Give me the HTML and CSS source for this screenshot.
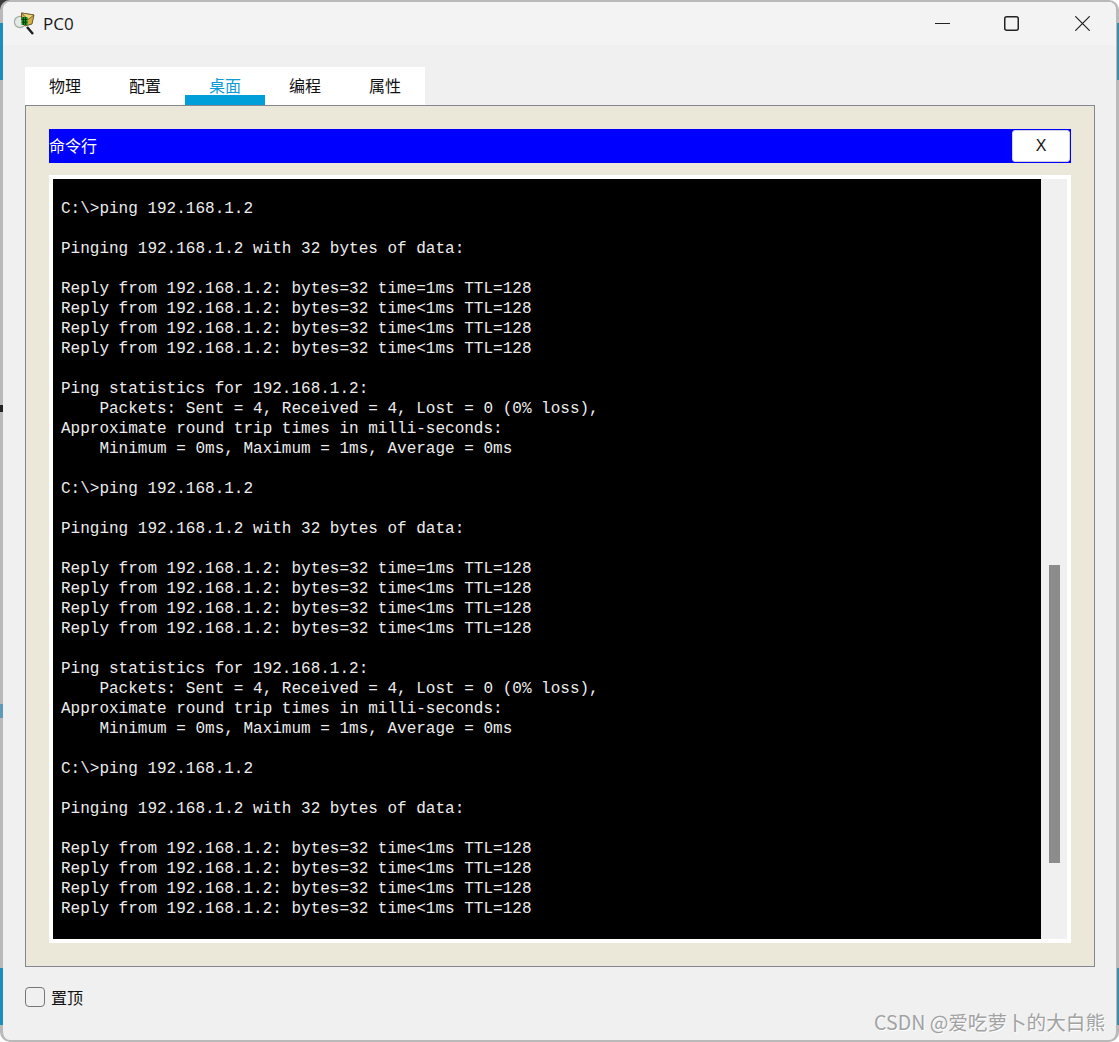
FILE: index.html
```html
<!DOCTYPE html>
<html lang="zh-CN">
<head>
<meta charset="utf-8">
<title>PC0</title>
<link rel="stylesheet" href="styles.css">
</head>
<body>
<div class="desk-corner"></div>
<div class="window">
  <header class="titlebar">
    <div class="title">
      <svg class="app-icon" width="24" height="24" viewBox="14 10 24 24">
        <path d="M27 26L33 33" stroke="#1c1c1c" stroke-width="2.400" fill="none"/>
        <circle cx="20" cy="21" r="5.600" fill="#e6e8e6" stroke="#a3a8a4" stroke-width="1.200"/>
        <path d="M21.500 12L34 14L32 23L25 25L21.500 18Z" fill="#d9ad45" stroke="#4d3f16" stroke-width=".8"/>
        <path d="M21.500 12L28 18.500L34 14Z" fill="#f0d680" stroke="#6a5620" stroke-width=".8"/>
        <rect x="21.500" y="16" width="6" height="8" fill="#0c9a18"/>
        <path d="M23.500 16V24M25.500 16V24M21.500 18.500H27.500M21.500 21.200H27.500" stroke="#03300a" stroke-width=".8"/>
      </svg>
      <span>PC0</span>
    </div>
    <div class="controls">
      <svg width="15" height="15" viewBox="0 0 15 15"><path d="M0 7.500H15" stroke="#222" stroke-width="1"/></svg>
      <svg width="15" height="15" viewBox="0 0 15 15"><rect x=".75" y=".75" width="13.500" height="13.500" rx="2" fill="none" stroke="#222" stroke-width="1.500"/></svg>
      <svg class="control-close" width="15" height="15" viewBox="0 0 15 15"><path d="M.3 .3L14.700 14.700M14.700 .3L.3 14.700" stroke="#222" stroke-width="1.200"/></svg>
    </div>
  </header>
  <main class="content">
    <nav class="tabs">
      <div class="tab">物理</div>
      <div class="tab">配置</div>
      <div class="tab tab-active">桌面</div>
      <div class="tab">编程</div>
      <div class="tab">属性</div>
    </nav>
    <section class="panel">
      <div class="cmd-bar">
        <span class="cmd-title">命令行</span>
        <button class="cmd-close">X</button>
      </div>
      <div class="terminal-frame">
<pre class="terminal">C:\&gt;ping 192.168.1.2

Pinging 192.168.1.2 with 32 bytes of data:

Reply from 192.168.1.2: bytes=32 time=1ms TTL=128
Reply from 192.168.1.2: bytes=32 time&lt;1ms TTL=128
Reply from 192.168.1.2: bytes=32 time&lt;1ms TTL=128
Reply from 192.168.1.2: bytes=32 time&lt;1ms TTL=128

Ping statistics for 192.168.1.2:
    Packets: Sent = 4, Received = 4, Lost = 0 (0% loss),
Approximate round trip times in milli-seconds:
    Minimum = 0ms, Maximum = 1ms, Average = 0ms

C:\&gt;ping 192.168.1.2

Pinging 192.168.1.2 with 32 bytes of data:

Reply from 192.168.1.2: bytes=32 time=1ms TTL=128
Reply from 192.168.1.2: bytes=32 time&lt;1ms TTL=128
Reply from 192.168.1.2: bytes=32 time&lt;1ms TTL=128
Reply from 192.168.1.2: bytes=32 time&lt;1ms TTL=128

Ping statistics for 192.168.1.2:
    Packets: Sent = 4, Received = 4, Lost = 0 (0% loss),
Approximate round trip times in milli-seconds:
    Minimum = 0ms, Maximum = 1ms, Average = 0ms

C:\&gt;ping 192.168.1.2

Pinging 192.168.1.2 with 32 bytes of data:

Reply from 192.168.1.2: bytes=32 time&lt;1ms TTL=128
Reply from 192.168.1.2: bytes=32 time&lt;1ms TTL=128
Reply from 192.168.1.2: bytes=32 time&lt;1ms TTL=128
Reply from 192.168.1.2: bytes=32 time&lt;1ms TTL=128</pre>
        <div class="scrollbar"><div class="thumb"></div></div>
      </div>
    </section>
    <label class="pin">
      <span class="checkbox"></span>
      <span>置顶</span>
    </label>
  </main>
  <div class="watermark">CSDN @爱吃萝卜的大白熊</div>
</div>
<div class="desk-strip strip-a"></div>
<div class="desk-strip strip-b"></div>
<div class="desk-strip strip-c"></div>
<div class="desk-strip strip-d"></div>
<div class="desk-strip strip-e"></div>
<div class="desk-strip strip-f"></div>
</body>
</html>
```
FILE: styles.css
```css
* { box-sizing: border-box; }
html, body { margin: 0; height: 100%; }
body {
  position: relative;
  width: 1119px;
  height: 1042px;
  overflow: hidden;
  background: #fff;
  font-family: "Noto Sans CJK SC", "Noto Sans", sans-serif;
}
.desk-corner {
  position: absolute;
  left: 0;
  top: 0;
  width: 14px;
  height: 14px;
  background: #3c3c3c;
}
.desk-strip { position: absolute; background: #1a8fbe; width: 3px; }
.strip-a { left: 0; top: 23px; height: 57px; }
.strip-b { left: 0; top: 704px; height: 14px; background: #5d9bb8; }
.strip-c { left: 0; top: 968px; height: 57px; }
.strip-d { right: 0; top: 23px; width: 2px; height: 57px; background: #3a8ea8; }
.strip-e { right: 0; top: 968px; width: 2px; height: 57px; background: #3a8ea8; }
.strip-f { left: 0; top: 405px; height: 7px; background: #222; }
.window {
  position: relative;
  width: 1119px;
  height: 1042px;
  background: #f0f0f0;
  border: solid #b9b9b9;
  border-width: 2px 3px 2px 3px;
  border-radius: 10px;
  overflow: hidden;
  display: flex;
  flex-direction: column;
}
.titlebar {
  height: 43px;
  flex: none;
  background: #f3f3f4;
  display: flex;
  align-items: center;
  justify-content: space-between;
  padding: 0 26px 1px 11px;
}
.title {
  display: flex;
  align-items: center;
  gap: 5px;
  font-family: "Open Sans", "Noto Sans", sans-serif;
  font-size: 17px;
  color: #1a1a1a;
}
.app-icon { display: block; }
.controls { display: flex; gap: 54px; }
.controls svg { display: block; }
.controls .control-close { margin-left: 2px; }
.content { flex: 1; padding: 22px 22px 0 22px; }
.tabs { display: flex; width: 400px; height: 38px; background: #fff; }
.tab {
  width: 80px;
  height: 38px;
  text-align: center;
  font-size: 16px;
  line-height: 36px;
  color: #111;
}
.tab-active { color: #0d9ad6; border-bottom: 10px solid #009fd9; }
.panel {
  width: 1070px;
  height: 862px;
  background: #ebe8da;
  border: 1px solid #868692;
  padding: 23px 23px 0 23px;
}
.cmd-bar {
  height: 34px;
  background: #0000ff;
  display: flex;
  align-items: center;
  justify-content: space-between;
  padding: 1px;
}
.cmd-title { color: #fff; font-size: 16px; line-height: 20px; margin: -2px 0 0 -1px; }
.cmd-close {
  width: 58px;
  height: 32px;
  background: #fff;
  border: 1px solid #d4d4e0;
  border-radius: 3px;
  font-family: "Liberation Sans", sans-serif;
  font-size: 16px;
  color: #111;
  padding: 0;
}
.terminal-frame {
  margin-top: 12px;
  height: 768px;
  width: 1022px;
  background: #fff;
  padding: 4px;
  display: flex;
}
.terminal {
  margin: 0;
  width: 988px;
  height: 760px;
  background: #000;
  color: #ececec;
  font-family: "Liberation Mono", monospace;
  font-size: 16px;
  line-height: 20px;
  padding: 20px 0 0 8px;
  overflow: hidden;
}
.scrollbar {
  width: 26px;
  height: 760px;
  background: #f0f0f0;
  padding: 386px 7px 0 8px;
}
.thumb { width: 11px; height: 298px; background: #8c8c8c; }
.pin {
  display: flex;
  align-items: center;
  gap: 6px;
  height: 20px;
  margin-top: 20px;
  font-size: 16px;
  line-height: 20px;
  color: #111;
}
.checkbox {
  width: 20px;
  height: 20px;
  border: 1px solid #777;
  border-radius: 4px;
  background: #f0f0f0;
}
.watermark {
  position: absolute;
  right: 11px;
  bottom: 5px;
  font-size: 19.6px;
  line-height: 26px;
  color: #a2a2a2;
  text-shadow: 1px 1px 1px #fff;
}
```
